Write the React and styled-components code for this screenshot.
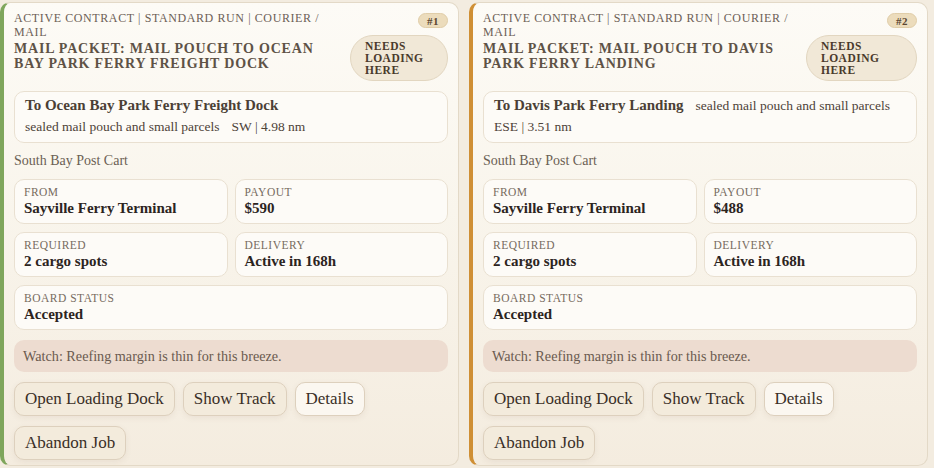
import React from "react";
import styled, { createGlobalStyle } from "styled-components";

const Global = createGlobalStyle`
  html, body { margin: 0; padding: 0; background: #f3ece0; }
  body { font-family: "Liberation Serif", "DejaVu Serif", serif; }
  * { box-sizing: border-box; }
`;

const Board = styled.div`
  display: grid;
  grid-template-columns: 459px 459px;
  gap: 10px;
  padding: 2px 7px 0 0;
  height: 468px;
  overflow: hidden;
`;

const Card = styled.section`
  display: flex;
  flex-direction: column;
  gap: 10px;
  padding: 8px 10px 6px 10px;
  border: 1px solid #e3d9c7;
  border-left: 4px solid ${(p) => p.$accent};
  border-radius: 10px;
  background: linear-gradient(180deg, #fdfbf6 0%, #f9f5ec 45%, #f4ecdf 100%);
  height: 464px;
  overflow: hidden;

  & > * {
    flex-shrink: 0;
  }
`;

const Header = styled.header`
  display: flex;
  align-items: flex-start;
  gap: 12px;
`;

const HeadText = styled.div`
  flex: 1 1 auto;
  min-width: 0;
`;

const Kicker = styled.div`
  font-size: 12px;
  line-height: 14px;
  letter-spacing: 0.6px;
  text-transform: uppercase;
  color: #6c6055;
`;

const Title = styled.h2`
  margin: 2px 0 0;
  font-size: 14px;
  line-height: 15px;
  font-weight: 700;
  letter-spacing: 0.8px;
  text-transform: uppercase;
  color: #5e5246;
`;

const HeadSide = styled.div`
  flex: 0 1 auto;
  display: flex;
  flex-direction: column;
  align-items: flex-end;
  gap: 7px;
  padding-top: 2px;
`;

const Num = styled.span`
  display: inline-block;
  padding: 1px 8px 0;
  height: 15px;
  line-height: 13px;
  font-size: 11px;
  font-weight: 700;
  color: #5a4630;
  background: #ecdcbc;
  border: 1px solid #e0cda8;
  border-radius: 999px;
  letter-spacing: 0.5px;
`;

const StatusPill = styled.span`
  display: block;
  padding: 4px 14px 4px 14px;
  font-size: 11.5px;
  line-height: 12px;
  font-weight: 700;
  letter-spacing: 0.5px;
  text-transform: uppercase;
  color: #4a3a2c;
  background: #f1e8d7;
  border: 1px solid #e2d6c0;
  border-radius: 24px;
  width: ${(p) => p.$w}px;
`;

const Panel = styled.div`
  background: #fdfbf7;
  border: 1px solid #e9e0d1;
  border-radius: 10px;
`;

const Route = styled(Panel)`
  display: flex;
  flex-wrap: wrap;
  align-items: baseline;
  column-gap: 12px;
  row-gap: 2px;
  padding: 4px 10px 6px;
`;

const RouteTitle = styled.strong`
  font-size: 15px;
  line-height: 19px;
  font-weight: 700;
  color: #4b3f35;
`;

const RouteMeta = styled.span`
  font-size: 13.5px;
  line-height: 19px;
  color: #4d4238;
`;

const Vessel = styled.div`
  font-size: 14px;
  line-height: 16px;
  color: #6b5f54;
`;

const Facts = styled.div`
  display: grid;
  grid-template-columns: 1fr 1fr;
  column-gap: 7px;
  row-gap: 8px;
`;

const Fact = styled(Panel)`
  grid-column: ${(p) => (p.$wide ? "1 / -1" : "auto")};
  padding: 5px 9px 6px;
  height: 45px;
`;

const FactLabel = styled.div`
  font-size: 11.5px;
  line-height: 14px;
  letter-spacing: 0.5px;
  text-transform: uppercase;
  color: #776b60;
`;

const FactValue = styled.div`
  font-size: 15px;
  line-height: 19px;
  font-weight: 700;
  color: #2c241e;
`;

const Warning = styled.div`
  background: #eddcd0;
  border-radius: 10px;
  padding: 0 9px;
  height: 32px;
  display: flex;
  align-items: center;
  font-size: 14.2px;
  line-height: 18px;
  color: #6a5a4f;
`;

const Actions = styled.div`
  display: flex;
  flex-wrap: wrap;
  gap: 10px 8px;
  padding-right: 70px;
`;

const Button = styled.button`
  font-family: inherit;
  font-size: 17px;
  line-height: 20px;
  height: 34px;
  color: #3a2f27;
  padding: 0 10px;
  border: 1px solid #ddd0bd;
  border-radius: 10px;
  background: ${(p) => (p.$light ? "#fbf7f0" : "#f3ebdc")};
  box-shadow: 0 2px 6px rgba(120, 95, 60, 0.08);
  cursor: pointer;
`;

const jobs = [
  {
    id: 1,
    accent: "#7fa65c",
    dest: "Ocean Bay Park Ferry Freight Dock",
    heading: "SW | 4.98 nm",
    payout: "$590",
    pillW: 98,
  },
  {
    id: 2,
    accent: "#cf8f35",
    dest: "Davis Park Ferry Landing",
    heading: "ESE | 3.51 nm",
    payout: "$488",
    pillW: 111,
  },
];

function JobCard({ job }) {
  return (
    <Card $accent={job.accent}>
      <Header>
        <HeadText>
          <Kicker>Active Contract | Standard Run | Courier / Mail</Kicker>
          <Title>Mail Packet: Mail pouch to {job.dest}</Title>
        </HeadText>
        <HeadSide>
          <Num>#{job.id}</Num>
          <StatusPill $w={job.pillW}>Needs loading here</StatusPill>
        </HeadSide>
      </Header>
      <Route>
        <RouteTitle>To {job.dest}</RouteTitle>
        <RouteMeta>sealed mail pouch and small parcels</RouteMeta>
        <RouteMeta>{job.heading}</RouteMeta>
      </Route>
      <Vessel>South Bay Post Cart</Vessel>
      <Facts>
        <Fact>
          <FactLabel>From</FactLabel>
          <FactValue>Sayville Ferry Terminal</FactValue>
        </Fact>
        <Fact>
          <FactLabel>Payout</FactLabel>
          <FactValue>{job.payout}</FactValue>
        </Fact>
        <Fact>
          <FactLabel>Required</FactLabel>
          <FactValue>2 cargo spots</FactValue>
        </Fact>
        <Fact>
          <FactLabel>Delivery</FactLabel>
          <FactValue>Active in 168h</FactValue>
        </Fact>
        <Fact $wide>
          <FactLabel>Board Status</FactLabel>
          <FactValue>Accepted</FactValue>
        </Fact>
      </Facts>
      <Warning>Watch: Reefing margin is thin for this breeze.</Warning>
      <Actions>
        <Button>Open Loading Dock</Button>
        <Button>Show Track</Button>
        <Button $light>Details</Button>
        <Button>Abandon Job</Button>
      </Actions>
    </Card>
  );
}

export default function App() {
  return (
    <>
      <Global />
      <Board>
        {jobs.map((j) => (
          <JobCard key={j.id} job={j} />
        ))}
      </Board>
    </>
  );
}
